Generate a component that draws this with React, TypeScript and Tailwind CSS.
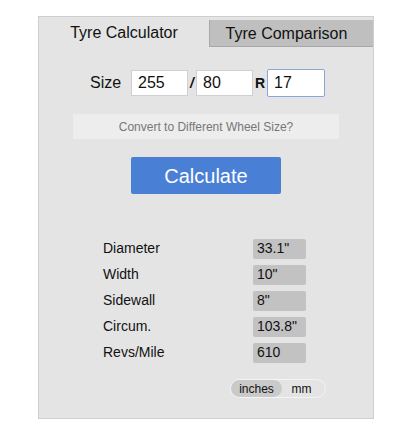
export default function App() {
  const rows = [
    ["Diameter", '33.1"'],
    ["Width", '10"'],
    ["Sidewall", '8"'],
    ["Circum.", '103.8"'],
    ["Revs/Mile", "610"],
  ];
  return (
    <div className="w-[395px] h-[428px] bg-white pt-[16px] pl-[38px] font-['Liberation_Sans',Arial,sans-serif] text-[#111]">
      <div className="w-[336px] h-[403px] bg-[#e4e4e4] border border-[#cfcfcf] flex flex-col">
        <div className="flex h-[30px]">
          <div className="w-[170px] flex items-center justify-center text-[16px] pt-[1px]">
            Tyre Calculator
          </div>
          <div className="flex-1 mt-[3px] bg-[#bfbfbf] border-l border-b border-[#a8a8a8] flex items-center justify-center text-[16px] pt-[2px] pr-[10px]">
            Tyre Comparison
          </div>
        </div>

        <div className="flex items-center mt-[22px] ml-[51px] text-[16px]">
          <span className="w-[41px]">Size</span>
          <div className="w-[57px] h-[26px] bg-white border border-[#d0d0d0] pl-[6px] flex items-center">255</div>
          <span className="w-[8px] text-center font-bold italic text-[14px]">/</span>
          <div className="w-[57px] h-[26px] bg-white border border-[#d0d0d0] pl-[6px] flex items-center">80</div>
          <span className="w-[14px] text-center font-bold text-[14px]">R</span>
          <div className="w-[58px] h-[28px] bg-white border-[1.5px] border-[#8aa6d6] rounded-[2px] pl-[6px] flex items-center">17</div>
        </div>

        <div className="mx-[34px] mt-[17px] h-[25px] bg-[#ededed] flex items-center justify-center text-[12px] text-[#777]">
          Convert to Different Wheel Size?
        </div>

        <div className="flex justify-center mt-[18px]">
          <div className="w-[150px] h-[37px] bg-[#4a7fd6] rounded-[2px] flex items-center justify-center text-white text-[20px]">
            Calculate
          </div>
        </div>

        <div className="mt-[44px] ml-[64px] flex flex-col gap-[5px]">
          {rows.map(([k, v]) => (
            <div key={k} className="flex items-center h-[21px] text-[14px]">
              <span className="w-[150px]">{k}</span>
              <div className="w-[53px] h-[20px] bg-[#c2c2c2] rounded-[2px] pl-[4px] flex items-center">{v}</div>
            </div>
          ))}
        </div>

        <div className="flex justify-end mt-[16px] mr-[47px]">
          <div className="w-[96px] h-[19px] border border-[#f4f4f4] rounded-full flex items-center text-[12px]">
            <div className="w-[51px] h-[17px] bg-[#cacaca] rounded-full flex items-center justify-center">inches</div>
            <div className="flex-1 text-center pr-[4px]">mm</div>
          </div>
        </div>
      </div>
    </div>
  );
}
